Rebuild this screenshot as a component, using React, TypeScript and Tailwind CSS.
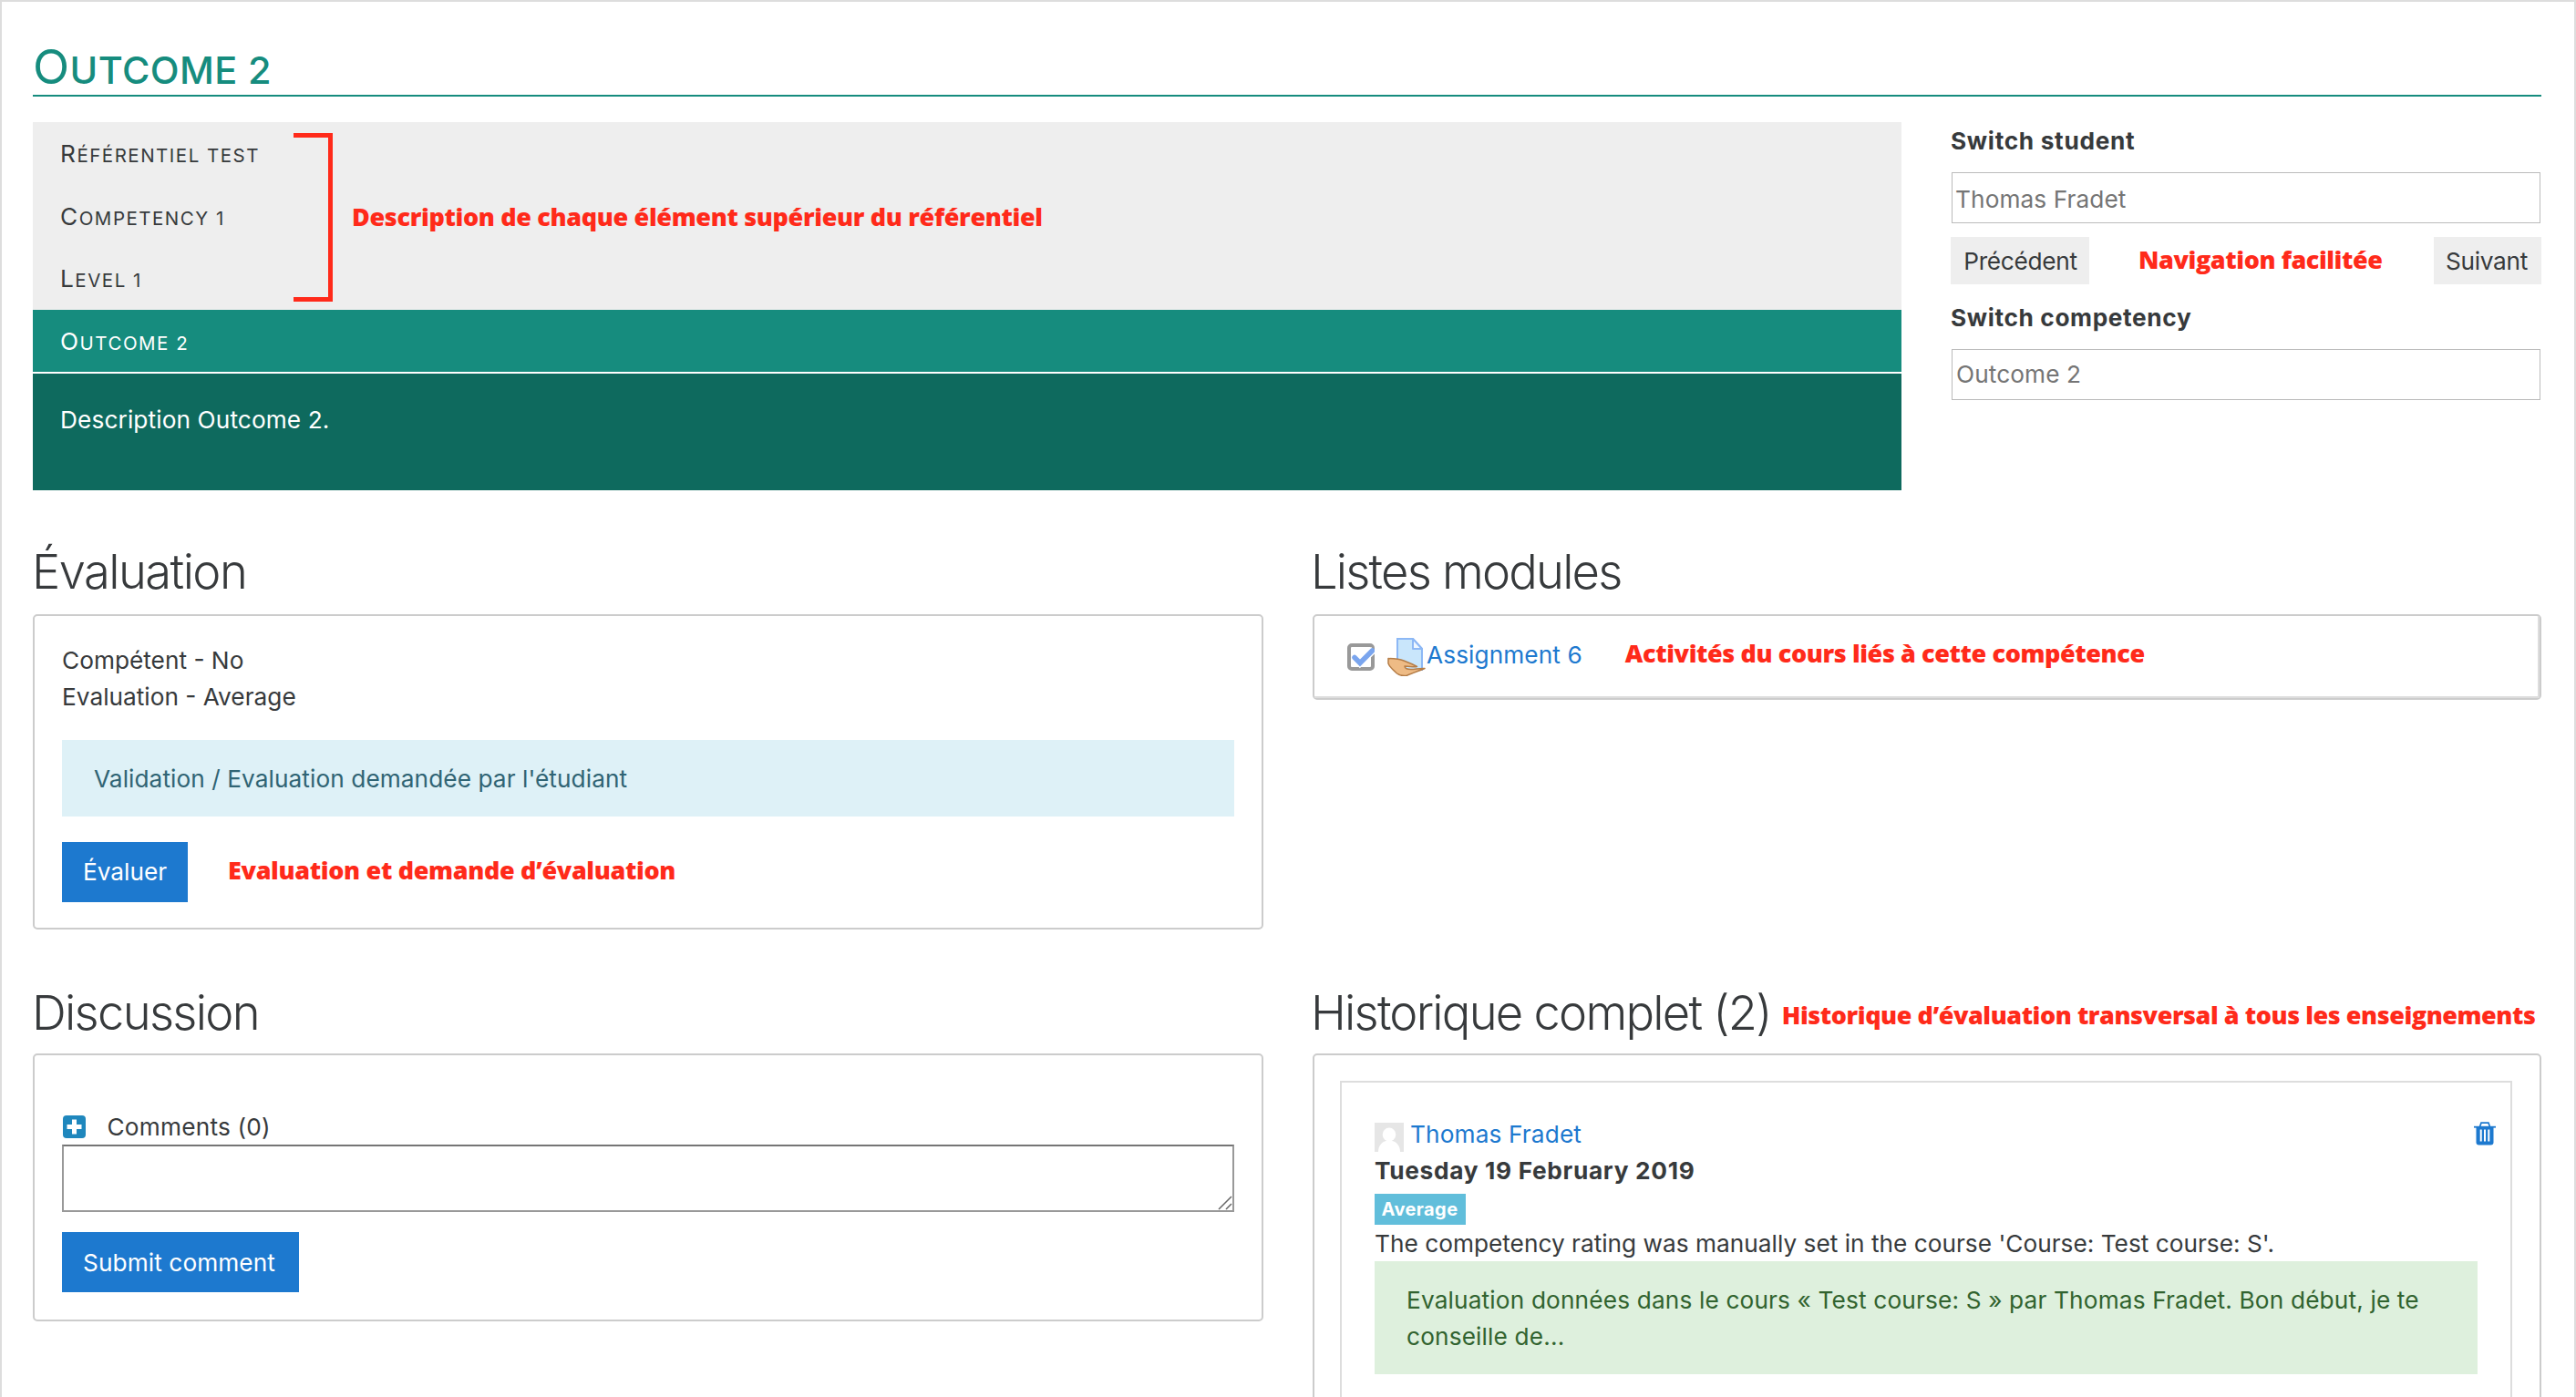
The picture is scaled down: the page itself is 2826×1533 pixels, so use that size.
import { clsx } from "clsx";
import type { ReactNode } from "react";

type ChildrenProps = {
  children: ReactNode;
  className?: string;
};

const ancestors = ["Référentiel test", "Competency 1", "Level 1"];

const Note = ({ children, className }: ChildrenProps) => (
  <span
    className={clsx(
      "font-['Open_Sans',sans-serif] text-[27px] leading-[40px] font-extrabold whitespace-nowrap text-[#ff2a1a]",
      className
    )}
  >
    {children}
  </span>
);

const Heading = ({ children, className }: ChildrenProps) => (
  <h2
    className={clsx(
      "text-[52.5px] leading-[63px] font-light whitespace-nowrap",
      className
    )}
  >
    {children}
  </h2>
);

const Box = ({ children, className }: ChildrenProps) => (
  <div className={clsx("rounded-[5px] border-2 border-[#ccc]", className)}>
    {children}
  </div>
);

const Row = ({ children, className }: ChildrenProps) => (
  <div
    className={clsx(
      "pt-[17px] pl-[30px] text-[20.5px] leading-[40px] tracking-[1.5px] uppercase first-letter:text-[26.25px] first-letter:leading-none",
      className
    )}
  >
    {children}
  </div>
);

const PrimaryButton = ({ children, className }: ChildrenProps) => (
  <button
    className={clsx("h-[66px] bg-[#1d79cf] text-center text-white", className)}
  >
    {children}
  </button>
);

const CheckboxIcon = () => (
  <svg width="30" height="30" viewBox="0 0 30 30" fill="none">
    <rect x="2" y="2" width="26" height="26" rx="3" stroke="#999" strokeWidth="4" />
    <path d="M8.5 15.5l5.5 6L29 7" stroke="#fff" strokeWidth="8" />
    <path d="M8 15.5l6 6L27.5 8" stroke="#7aa5ee" strokeWidth="5.5" strokeLinecap="round" />
  </svg>
);

const AssignmentIcon = () => (
  <svg width="42" height="42" viewBox="0 0 42 42" fill="none">
    <path d="M11 1h17l10 11v23H11z" fill="#c9e6fb" stroke="#8db8f5" strokeWidth="2" />
    <path d="M28 1v11h10z" fill="#eef7ff" stroke="#8db8f5" strokeWidth="2" strokeLinejoin="round" />
    <path
      d="M1 22.5c6 .2 12 .6 17 2.5 4 1.5 10 4 14.500 6.500-3.500.8-8-.5-13.500-.5 0 3 3 3.500 7 3.500 5 0 9-1.500 15-1-6 2.500-13 5-20 8-3.500.3-8-.5-10.500-2.500C6 35 2 31 1 28z"
      fill="#eebb85"
      stroke="#b57d47"
      strokeWidth="1.5"
      strokeLinejoin="round"
    />
  </svg>
);

const PlusIcon = () => (
  <svg width="25" height="25" viewBox="0 0 25 25">
    <rect width="25" height="25" rx="4" fill="#1f87bd" />
    <path d="M10 4.5h5V10h5.5v5H15v5.5h-5V15H4.5v-5H10z" fill="#fff" />
  </svg>
);

const AvatarIcon = () => (
  <svg width="32" height="32" viewBox="0 0 32 32">
    <rect width="32" height="32" fill="#e6e6e6" />
    <ellipse cx="16" cy="13" rx="7.3" ry="7.5" fill="#fff" />
    <path d="M4 32c0-7 4.5-12.5 12-12.5S28 25 28 32z" fill="#fff" />
  </svg>
);

const TrashIcon = () => (
  <svg width="24" height="26" viewBox="0 0 24 26" fill="#1d79cf">
    <path d="M6.5 5.5L8 1.2h8l1.5 4.3" fill="none" stroke="#1d79cf" strokeWidth="1.7" />
    <rect y="4.8" width="24" height="1.8" />
    <path d="M2.5 6h19v16.500a3 3 0 0 1-3 3h-13a3 3 0 0 1-3-3z" />
    <path d="M6.700 8.500H8.700V21.500H6.700zM11 8.500h2V21.500h-2zM15.300 8.500h2V21.500h-2z" fill="#fff" />
  </svg>
);

const Header = () => (
  <div className="flex">
    <div className="relative w-[2050px]">
      <div className="h-[206px] bg-[#eee]">
        {ancestors.map((name) => (
          <Row key={name} className="h-[68.67px]">
            {name}
          </Row>
        ))}
      </div>
      <Row className="h-[68px] bg-[#168c7e] text-white">Outcome 2</Row>
      <div className="mt-0.5 h-[128px] bg-[#0e6a5e] pt-[31px] pl-[30px] tracking-[0.1px] text-white">
        Description Outcome 2.
      </div>

      <div className="absolute top-[11.5px] left-[286px] h-[185px] w-[43px] border-y-5 border-r-5 border-[#ff2a1a]" />
      <Note className="absolute top-[84px] left-[350px] tracking-[-0.34px]">
        Description de chaque élément supérieur du référentiel
      </Note>
    </div>

    <div className="ml-[54px] w-[648px]">
      <div className="pt-px font-bold tracking-[0.68px]">Switch student</div>
      <div className="mx-px mt-3.5 h-14 border border-[#bbb] pt-[9px] pl-[3px] tracking-[0.08px] text-[#757575]">
        Thomas Fradet
      </div>
      <div className="mt-[15px] flex h-[52px] items-center">
        <button className="h-full w-[152px] bg-[#eee] pt-px pl-px tracking-[-0.3px]">Précédent</button>
        <Note className="ml-[54px] pb-[3px] tracking-[-0.42px]">Navigation facilitée</Note>
        <button className="ml-auto h-full w-[118px] bg-[#eee] pt-px pr-[8px] pl-[6px] tracking-[-0.3px]">
          Suivant
        </button>
      </div>
      <div className="mt-[17px] font-bold tracking-[0.62px]">Switch competency</div>
      <div className="mx-px mt-3.5 h-14 border border-[#bbb] pt-[7px] pl-[4px] tracking-[0.08px] text-[#757575]">
        Outcome 2
      </div>
    </div>
  </div>
);

const Evaluation = () => (
  <section>
    <Heading className="-ml-px h-[79px] pt-px tracking-[-1.55px]">Évaluation</Heading>
    <Box className="h-[346px] px-[30px] pt-[29px]">
      <p>Compétent - No</p>
      <p>Evaluation - Average</p>
      <div className="mt-[27px] h-[84px] bg-[#def1f7] px-[35px] pt-[23px] tracking-[0.06px] text-[#306474]">
        Validation / Evaluation demandée par l'étudiant
      </div>
      <div className="mt-7 flex items-center">
        <PrimaryButton className="w-[138px]">Évaluer</PrimaryButton>
        <Note className="ml-[44px] pb-[4px] tracking-[-0.34px]">
          Evaluation et demande d’évaluation
        </Note>
      </div>
    </Box>
  </section>
);

const Modules = () => (
  <section>
    <Heading className="-ml-0.5 h-[79px] pt-px tracking-[-1.8px]">Listes modules</Heading>
    <Box>
      <div className="flex h-[90px] items-start border-r-2 border-b-2 border-[#ddd] pl-9">
        <div className="mt-[30px]">
          <CheckboxIcon />
        </div>
        <div className="mt-6 ml-3.5">
          <AssignmentIcon />
        </div>
        <a className="mt-[23px] ml-px tracking-[0.08px] text-[#1d79cf]">Assignment 6</a>
        <Note className="mt-[21px] ml-[47px] tracking-[-0.4px]">
          Activités du cours liés à cette compétence
        </Note>
      </div>
    </Box>
  </section>
);

const Discussion = () => (
  <section>
    <Heading className="-ml-px h-[76px] tracking-[-1.7px]">Discussion</Heading>
    <Box className="h-[294px] px-[30px] pt-[58px]">
      <div className="flex h-10 items-center">
        <div className="ml-px">
          <PlusIcon />
        </div>
        <span className="mt-0.5 ml-[23.5px] tracking-[0.2px]">Comments (0)</span>
      </div>
      <div className="relative h-[74px] border-2 border-[#999] border-t-[#757575] bg-white">
        <svg className="absolute right-0 bottom-0" width="16" height="16" stroke="#666" strokeWidth="1.5">
          <path d="M1 15L15 1M9 15l6-6" />
        </svg>
      </div>
      <PrimaryButton className="mt-[22px] w-[260px] pt-0.5 pr-2 pl-[5px] tracking-[0.08px]">
        Submit comment
      </PrimaryButton>
    </Box>
  </section>
);

const History = () => (
  <section>
    <div className="flex h-[76px]">
      <Heading className="-ml-0.5 tracking-[-1.77px]">Historique complet (2)</Heading>
      <Note className="mt-3.5 ml-[12px] tracking-[-0.45px]">
        Historique d’évaluation transversal à tous les enseignements
      </Note>
    </div>
    <Box className="h-[420px] px-7 pt-7">
      <div className="h-[390px] w-[1286px] border-2 border-[#ddd] px-9 pt-[37px]">
        <div className="flex h-10 items-start">
          <div className="mt-[7px]">
            <AvatarIcon />
          </div>
          <a className="ml-[7px] tracking-[0.12px] text-[#1d79cf]">Thomas Fradet</a>
          <div className="mt-1.5 -mr-5 ml-auto">
            <TrashIcon />
          </div>
        </div>
        <div className="font-bold tracking-[0.68px]">Tuesday 19 February 2019</div>
        <div className="mt-[5px] h-[34px] w-[100px] bg-[#61bedb] pr-px text-center text-[20px] leading-[35px] font-bold tracking-[0.4px] text-white">
          Average
        </div>
        <p className="h-10 pt-px">
          The competency rating was manually set in the course 'Course: Test course: S'.
        </p>
        <div className="h-[124px] bg-[#def0dd] pt-[23px] pr-[34px] pl-[35px] tracking-[0.14px] text-[#31632f]">
          Evaluation données dans le cours « Test course: S » par Thomas Fradet. Bon début, je te
          conseille de...
        </div>
      </div>
    </Box>
  </section>
);

export default function App() {
  return (
    <div className="h-[1533px] w-[2826px] overflow-hidden border-2 border-b-0 border-[#ddd] bg-white pt-[43px] pl-[34px] font-[Inter,sans-serif] text-[26.25px] leading-[40px] text-[#373a3c]">
      <div className="w-[2752px]">
        <h1 className="mb-7 h-[61px] border-b-2 border-[#168c7e] text-[41.5px] leading-[64px] font-medium tracking-[0.4px] text-[#168c7e] uppercase first-letter:text-[52.5px] first-letter:leading-none first-letter:font-normal">
          Outcome 2
        </h1>
        <Header />
        <div className="mt-[57px] grid grid-cols-[1350px_1348px] gap-x-[54px] gap-y-[60px]">
          <Evaluation />
          <Modules />
          <Discussion />
          <History />
        </div>
      </div>
    </div>
  );
}
